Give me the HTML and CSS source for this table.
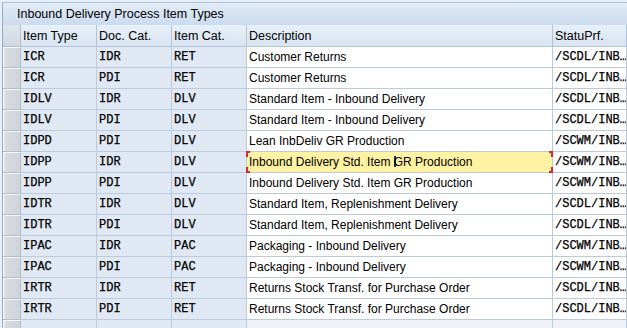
FILE: index.html
```html
<!DOCTYPE html>
<html lang="en">
<head>
    <meta charset="UTF-8">
    <title>Inbound Delivery Process Item Types</title>
    <link rel="stylesheet" href="styles.css">
</head>
<body>
    <div class="window">
        <div class="panel">
            <div class="titlebar">Inbound Delivery Process Item Types</div>
            <div class="grid">
                <div class="hd sel"></div>
                <div class="hd">Item Type</div>
                <div class="hd">Doc. Cat.</div>
                <div class="hd">Item Cat.</div>
                <div class="hd">Description</div>
                <div class="hd">StatuPrf.</div>

                <div class="sel"></div><div class="key mono">ICR</div><div class="key mono">IDR</div><div class="key mono">RET</div><div class="txt">Customer Returns</div><div class="txt mono">/SCDL/INB…</div>
                <div class="sel"></div><div class="key mono">ICR</div><div class="key mono">PDI</div><div class="key mono">RET</div><div class="txt">Customer Returns</div><div class="txt mono">/SCDL/INB…</div>
                <div class="sel"></div><div class="key mono">IDLV</div><div class="key mono">IDR</div><div class="key mono">DLV</div><div class="txt">Standard Item - Inbound Delivery</div><div class="txt mono">/SCDL/INB…</div>
                <div class="sel"></div><div class="key mono">IDLV</div><div class="key mono">PDI</div><div class="key mono">DLV</div><div class="txt">Standard Item - Inbound Delivery</div><div class="txt mono">/SCDL/INB…</div>
                <div class="sel"></div><div class="key mono">IDPD</div><div class="key mono">PDI</div><div class="key mono">DLV</div><div class="txt">Lean InbDeliv GR Production</div><div class="txt mono">/SCWM/INB…</div>
                <div class="sel"></div><div class="key mono">IDPP</div><div class="key mono">IDR</div><div class="key mono">DLV</div><div class="txt focus">Inbound Delivery Std. Item <span class="caret"></span>GR Production</div><div class="txt mono">/SCWM/INB…</div>
                <div class="sel"></div><div class="key mono">IDPP</div><div class="key mono">PDI</div><div class="key mono">DLV</div><div class="txt">Inbound Delivery Std. Item GR Production</div><div class="txt mono">/SCWM/INB…</div>
                <div class="sel"></div><div class="key mono">IDTR</div><div class="key mono">IDR</div><div class="key mono">DLV</div><div class="txt">Standard Item, Replenishment Delivery</div><div class="txt mono">/SCDL/INB…</div>
                <div class="sel"></div><div class="key mono">IDTR</div><div class="key mono">PDI</div><div class="key mono">DLV</div><div class="txt">Standard Item, Replenishment Delivery</div><div class="txt mono">/SCDL/INB…</div>
                <div class="sel"></div><div class="key mono">IPAC</div><div class="key mono">IDR</div><div class="key mono">PAC</div><div class="txt">Packaging - Inbound Delivery</div><div class="txt mono">/SCWM/INB…</div>
                <div class="sel"></div><div class="key mono">IPAC</div><div class="key mono">PDI</div><div class="key mono">PAC</div><div class="txt">Packaging - Inbound Delivery</div><div class="txt mono">/SCWM/INB…</div>
                <div class="sel"></div><div class="key mono">IRTR</div><div class="key mono">IDR</div><div class="key mono">RET</div><div class="txt">Returns Stock Transf. for Purchase Order</div><div class="txt mono">/SCDL/INB…</div>
                <div class="sel"></div><div class="key mono">IRTR</div><div class="key mono">PDI</div><div class="key mono">RET</div><div class="txt">Returns Stock Transf. for Purchase Order</div><div class="txt mono">/SCDL/INB…</div>

                <div class="sel"></div><div class="key"></div><div class="key"></div><div class="key"></div><div class="txt empty"></div><div class="txt empty"></div>
            </div>
        </div>
    </div>
</body>
</html>
```

FILE: styles.css
```css
body {
    margin: 0;
    background-color: #eef3f9;
    font-family: "Liberation Sans", Arial, sans-serif;
    font-size: 12px;
    color: #000;
    overflow: hidden;
}

.window {
    padding: 2px 0 0 2px;
    height: 326px;
    background-color: #e8eff7;
}

.panel {
    border-left: 1px solid #95abc8;
    height: 100%;
}

.titlebar {
    height: 22px;
    line-height: 22px;
    padding-left: 14px;
    border-top: 1px solid #a9c0dc;
    background: linear-gradient(#e3ecf6, #cbdbee);
    font-size: 12.5px;
}

.grid {
    display: grid;
    grid-template-columns: 18px 76px 75px 75px 306px 1fr;
    grid-template-rows: 22px;
    grid-auto-rows: 21px;
}

.grid > div {
    box-sizing: border-box;
    border-right: 1px solid #bccbdc;
    border-bottom: 1px solid #bccbdc;
    padding-left: 2px;
    line-height: 21px;
    white-space: nowrap;
    overflow: hidden;
}

.grid > .hd {
    line-height: 22px;
    font-size: 12.5px;
    background: linear-gradient(#e8eff8, #d9e5f1);
    border-right-color: #b3c4d9;
    border-bottom-color: #b3c4d9;
}

.grid > .sel {
    padding: 0;
    background: linear-gradient(90deg, #f2f4f6 0, #f2f4f6 1px, #d7dbe0 2px, #cfd4da 100%);
    border-top: 1px solid #f4f6f8;
    border-right-color: #b4becb;
    border-bottom-color: #b4becb;
}

.grid > .hd.sel {
    border-top: none;
    background: linear-gradient(#e0e6ed, #d0d7df);
}

.key {
    background-color: #dfe8f3;
}

.txt {
    background-color: #fff;
}

.txt.empty {
    background-color: #eef2f8;
}

.mono {
    font-family: "Liberation Mono", "Courier New", monospace;
    font-size: 12px;
    -webkit-text-stroke: 0.25px #000;
}

/* focused input cell, red marks on its four corners */
.grid > .focus {
    position: relative;
    overflow: visible;
    background-color: #fff3a3;
}

.focus::before {
    content: "";
    position: absolute;
    top: -1px;
    bottom: -1px;
    left: -1px;
    right: -1px;
    background:
        linear-gradient(#e0262a, #e0262a) left top / 2px 6px no-repeat,
        linear-gradient(#e0262a, #e0262a) left top / 4px 2px no-repeat,
        linear-gradient(#e0262a, #e0262a) left bottom / 2px 6px no-repeat,
        linear-gradient(#e0262a, #e0262a) left bottom / 4px 2px no-repeat,
        linear-gradient(#e0262a, #e0262a) right top / 2px 6px no-repeat,
        linear-gradient(#e0262a, #e0262a) right top / 4px 2px no-repeat,
        linear-gradient(#e0262a, #e0262a) right bottom / 2px 6px no-repeat,
        linear-gradient(#e0262a, #e0262a) right bottom / 4px 2px no-repeat;
}

.caret {
    display: inline-block;
    width: 2px;
    height: 11px;
    margin-right: -2px;
    vertical-align: -1px;
    background-color: #16307a;
}
```
